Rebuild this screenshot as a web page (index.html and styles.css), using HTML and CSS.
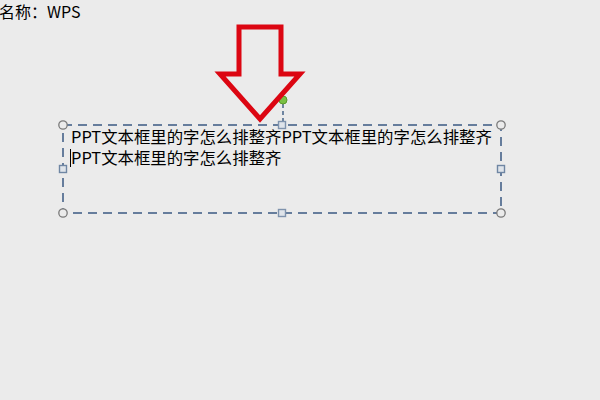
FILE: index.html
```html
<!DOCTYPE html>
<html lang="zh">
<head>
<meta charset="utf-8">
<link rel="stylesheet" href="styles.css">
</head>
<body>
<div class="page">
  <div class="title">名称：WPS</div>
  <div class="stage">
    <div class="textbox">
      <svg class="frame" width="452" height="134" viewBox="0 0 452 134">
        <rect x="7" y="37" width="438" height="88" fill="none" stroke="#3b5a82" stroke-width="1.5" stroke-dasharray="9 6"/>
        <line x1="227" y1="16" x2="227" y2="34" stroke="#3b5a82" stroke-width="1.4" stroke-dasharray="4 3"/>
        <circle cx="227" cy="12" r="4" fill="#79c043" stroke="#5a9a2a" stroke-width="1"/>
        <circle cx="7" cy="37" r="4.2" fill="#ebebeb" stroke="#7a7a7a" stroke-width="1.3"/>
        <circle cx="445" cy="37" r="4.2" fill="#ebebeb" stroke="#7a7a7a" stroke-width="1.3"/>
        <circle cx="7" cy="125" r="4.2" fill="#ebebeb" stroke="#7a7a7a" stroke-width="1.3"/>
        <circle cx="445" cy="125" r="4.2" fill="#ebebeb" stroke="#7a7a7a" stroke-width="1.3"/>
        <rect x="222.5" y="33.5" width="7" height="7" fill="#dfe4ea" stroke="#7f93ad" stroke-width="1.4"/>
        <rect x="222.5" y="121.5" width="7" height="7" fill="#dfe4ea" stroke="#7f93ad" stroke-width="1.4"/>
        <rect x="3.5" y="77.5" width="7" height="7" fill="#dfe4ea" stroke="#6f86a3" stroke-width="1.4"/>
        <rect x="441.5" y="77.5" width="7" height="7" fill="#dfe4ea" stroke="#6f86a3" stroke-width="1.4"/>
      </svg>
      <p class="content">PPT文本框里的字怎么排整齐PPT文本框里的字怎么排整齐<br><span class="caret"></span>PPT文本框里的字怎么排整齐</p>
    </div>
  </div>
  <svg class="arrow" width="110" height="110" viewBox="0 0 110 110">
    <polygon points="39,7 81,7 81,54 100,54 60,99 20,54 39,54" fill="none" stroke="#dc0612" stroke-width="5" stroke-linejoin="miter"/>
  </svg>
</div>
</body>
</html>
```
FILE: styles.css
```css
html, body {
  margin: 0;
  padding: 0;
  background: #ebebeb;
}
.page {
  position: relative;
  width: 600px;
  height: 400px;
  overflow: hidden;
  font-family: "Noto Sans CJK SC", "Noto Sans", sans-serif;
  color: #000;
}
.title {
  font-size: 16px;
  line-height: 22px;
  height: 20px;
  margin-left: -1px;
}
.stage {
  padding-top: 105px;
}
.textbox {
  position: relative;
  margin-left: 63px;
  width: 438px;
  height: 88px;
}
.frame {
  position: absolute;
  left: -7px;
  top: -37px;
  overflow: visible;
}
.content {
  position: relative;
  margin: 0;
  padding: 1px 0 0 8px;
  font-size: 16.4px;
  line-height: 21px;
  white-space: nowrap;
}
.caret {
  display: inline-block;
  width: 1px;
  height: 18px;
  background: #000;
  vertical-align: -3px;
  margin-left: -1px;
}
.arrow {
  position: absolute;
  left: 200px;
  top: 20px;
}
```
